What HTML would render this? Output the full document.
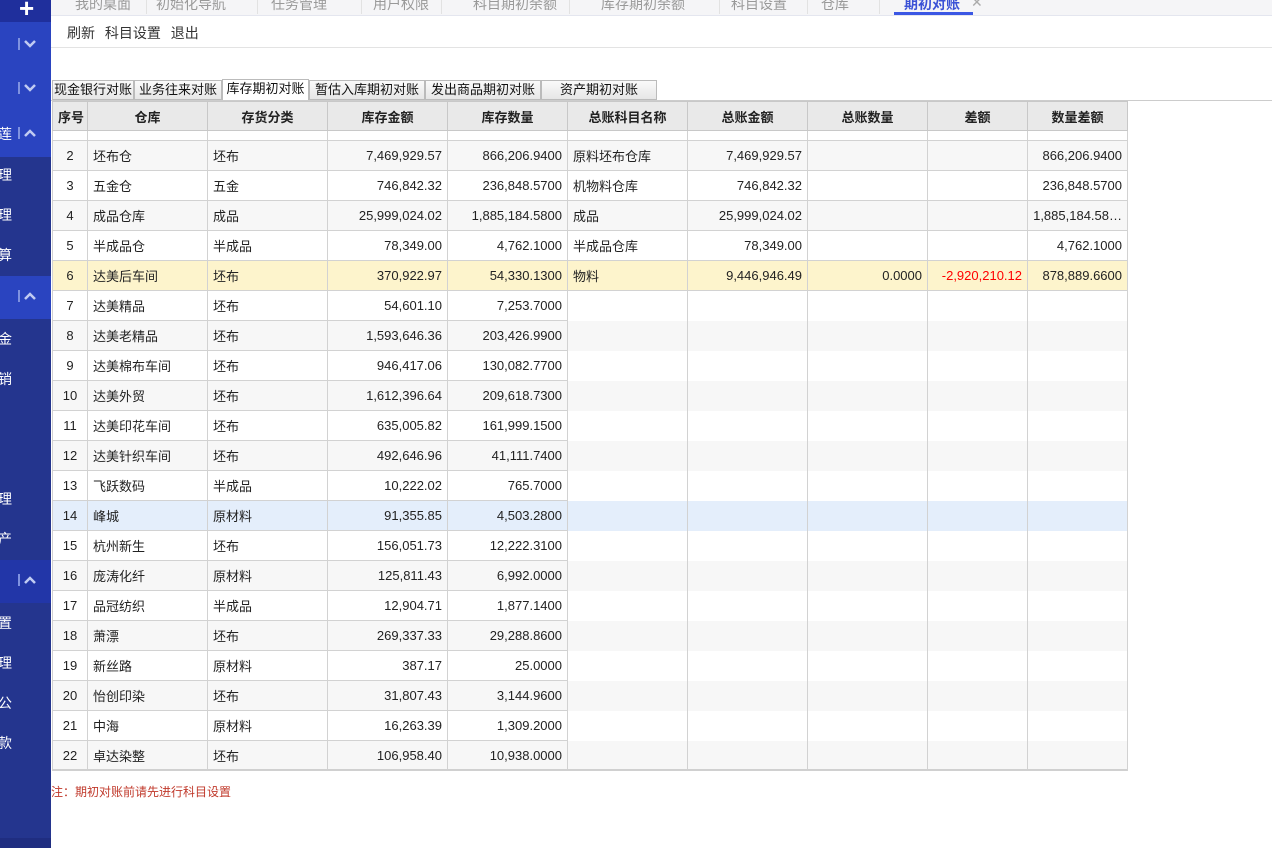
<!DOCTYPE html>
<html><head><meta charset="utf-8"><style>
*{margin:0;padding:0;box-sizing:border-box}
body{width:1272px;height:848px;overflow:hidden;background:#fff;font-family:"Liberation Sans","Noto Sans CJK SC",sans-serif;font-size:13px;color:#222;position:relative}
.sb{position:absolute;left:0;top:0;width:51px;height:848px;background:#24358e}
.bd{position:absolute;left:0;width:51px}
.lt{background:#2a44c0}
.sbt{position:absolute;color:#fff;font-size:14px;left:0}
.chev{position:absolute;left:18px;width:2px;height:12px;background:#7f92e0}
.cg{position:absolute;left:24px}
.tabs{position:absolute;left:51px;top:0;width:1221px;height:16px;background:#f5f5f7;border-bottom:1px solid #e4e6ef}
.tabs span{position:absolute;top:-6px;color:#999;font-size:14px}
.tabs i{position:absolute;top:0;width:1px;height:14px;background:#e2e2e2}
.tb{position:absolute;left:67px;top:23px;font-size:14px;color:#333;word-spacing:6px}
.hl{position:absolute;left:51px;top:47px;width:1221px;height:1px;background:#e3e3e3}
.st{position:absolute;top:80px;height:20px;border:1px solid #bbb;background:linear-gradient(#fafafa,#e6e6e6);font-size:13px;text-align:center;line-height:17px;color:#111}
.st.a{background:#fff;border-bottom-color:#fff;top:79px;height:22px}
.sl{position:absolute;left:51px;top:100px;width:1221px;height:1px;background:#ccc}
table{position:absolute;left:52px;top:101px;width:1075px;border-collapse:collapse;table-layout:fixed}
td,th{border:1px solid #d2d2d2;height:30px;padding:0 5px;white-space:nowrap;overflow:hidden;font-weight:normal}
th{background:#e9e9e9;height:29px;font-weight:bold;text-align:center;border-color:#c8c8c8}
td.n{text-align:right}
td.c{text-align:center}
tr.p td{height:10px}
tr.g td{background:#f7f7f7}
tr.y td{background:#fdf4cc}
tr.b td{background:#e4eefb}
td.e{border-top:none;border-bottom:none}
.bl{position:absolute;left:52px;top:769px;width:1075px;height:2px;background:#d0d0d0}
.note{position:absolute;left:51px;top:783px;color:#c0392b;font-size:12px}
</style></head><body>
<div class="sb">
<div class="bd" style="top:0;height:22px;background:#1f2f9c"></div>
<div class="bd lt" style="top:22px;height:135px"></div>
<div class="bd lt" style="top:276px;height:43px"></div>
<div class="bd" style="top:560px;height:43px;background:#2236a8"></div>
<div class="bd" style="top:838px;height:10px;background:#1f2d80"></div>
<div style="position:absolute;top:-7px;left:19px;color:#fff;font-size:26px;font-weight:bold">+</div>
<span class="chev" style="top:38px"></span><svg class="cg" style="top:39px" width="12" height="10"><polyline points="1,2 6,7 11,2" fill="none" stroke="#c0cbf2" stroke-width="2.5"/></svg>
<span class="chev" style="top:82px"></span><svg class="cg" style="top:83px" width="12" height="10"><polyline points="1,2 6,7 11,2" fill="none" stroke="#c0cbf2" stroke-width="2.5"/></svg>
<span class="chev" style="top:127px"></span><svg class="cg" style="top:128px" width="12" height="10"><polyline points="1,8 6,3 11,8" fill="none" stroke="#c0cbf2" stroke-width="2.5"/></svg>
<span class="chev" style="top:290px"></span><svg class="cg" style="top:291px" width="12" height="10"><polyline points="1,8 6,3 11,8" fill="none" stroke="#c0cbf2" stroke-width="2.5"/></svg>
<span class="chev" style="top:574px"></span><svg class="cg" style="top:575px" width="12" height="10"><polyline points="1,8 6,3 11,8" fill="none" stroke="#c0cbf2" stroke-width="2.5"/></svg>
<span class="sbt" style="top:124px;left:-2px">莲</span>
<span class="sbt" style="top:165px;left:-2px">理</span>
<span class="sbt" style="top:205px;left:-2px">理</span>
<span class="sbt" style="top:245px;left:-2px">算</span>
<span class="sbt" style="top:329px;left:-2px">金</span>
<span class="sbt" style="top:369px;left:-2px">销</span>
<span class="sbt" style="top:489px;left:-2px">理</span>
<span class="sbt" style="top:529px;left:-2px">产</span>
<span class="sbt" style="top:613px;left:-2px">置</span>
<span class="sbt" style="top:653px;left:-2px">理</span>
<span class="sbt" style="top:693px;left:-2px">公</span>
<span class="sbt" style="top:733px;left:-2px">款</span>
</div>
<div class="tabs">
<span style="left:24px">我的桌面</span><i style="left:95px"></i>
<span style="left:105px">初始化导航</span><i style="left:206px"></i>
<span style="left:220px">任务管理</span><i style="left:310px"></i>
<span style="left:322px">用户权限</span><i style="left:390px"></i>
<span style="left:422px">科目期初余额</span><i style="left:518px"></i>
<span style="left:550px">库存期初余额</span><i style="left:668px"></i>
<span style="left:680px">科目设置</span><i style="left:756px"></i>
<span style="left:770px">仓库</span><i style="left:828px"></i>
<span style="left:853px;color:#3b52d6;font-weight:bold">期初对账</span><span style="left:920px;color:#aaa">✕</span>
<div style="position:absolute;left:843px;top:12px;width:79px;height:3px;background:#3b57e4"></div>
</div>
<div class="tb">刷新 科目设置 退出</div>
<div class="hl"></div>
<div class="st" style="left:52px;width:82px">现金银行对账</div>
<div class="st" style="left:134px;width:88px">业务往来对账</div>
<div class="st a" style="left:222px;width:87px">库存期初对账</div>
<div class="st" style="left:309px;width:116px">暂估入库期初对账</div>
<div class="st" style="left:425px;width:116px">发出商品期初对账</div>
<div class="st" style="left:541px;width:116px">资产期初对账</div>
<div class="sl"></div>
<table>
<colgroup><col style="width:35px"><col style="width:120px"><col style="width:120px"><col style="width:120px"><col style="width:120px"><col style="width:120px"><col style="width:120px"><col style="width:120px"><col style="width:100px"><col style="width:100px"></colgroup>
<tr><th>序号</th><th>仓库</th><th>存货分类</th><th>库存金额</th><th>库存数量</th><th>总账科目名称</th><th>总账金额</th><th>总账数量</th><th>差额</th><th>数量差额</th></tr>
<tr class="p"><td></td><td></td><td></td><td></td><td></td><td></td><td></td><td></td><td></td><td></td></tr>
<tr class="g"><td class="c">2</td><td>坯布仓</td><td>坯布</td><td class="n">7,469,929.57</td><td class="n">866,206.9400</td><td>原料坯布仓库</td><td class="n">7,469,929.57</td><td></td><td></td><td class="n">866,206.9400</td></tr>
<tr><td class="c">3</td><td>五金仓</td><td>五金</td><td class="n">746,842.32</td><td class="n">236,848.5700</td><td>机物料仓库</td><td class="n">746,842.32</td><td></td><td></td><td class="n">236,848.5700</td></tr>
<tr class="g"><td class="c">4</td><td>成品仓库</td><td>成品</td><td class="n">25,999,024.02</td><td class="n">1,885,184.5800</td><td>成品</td><td class="n">25,999,024.02</td><td></td><td></td><td class="n">1,885,184.58…</td></tr>
<tr><td class="c">5</td><td>半成品仓</td><td>半成品</td><td class="n">78,349.00</td><td class="n">4,762.1000</td><td>半成品仓库</td><td class="n">78,349.00</td><td></td><td></td><td class="n">4,762.1000</td></tr>
<tr class="y"><td class="c">6</td><td>达美后车间</td><td>坯布</td><td class="n">370,922.97</td><td class="n">54,330.1300</td><td>物料</td><td class="n">9,446,946.49</td><td class="n">0.0000</td><td class="n" style="color:#f00">-2,920,210.12</td><td class="n">878,889.6600</td></tr>
<tr><td class="c">7</td><td>达美精品</td><td>坯布</td><td class="n">54,601.10</td><td class="n">7,253.7000</td><td class="e"></td><td class="e"></td><td class="e"></td><td class="e"></td><td class="e"></td></tr>
<tr class="g"><td class="c">8</td><td>达美老精品</td><td>坯布</td><td class="n">1,593,646.36</td><td class="n">203,426.9900</td><td class="e"></td><td class="e"></td><td class="e"></td><td class="e"></td><td class="e"></td></tr>
<tr><td class="c">9</td><td>达美棉布车间</td><td>坯布</td><td class="n">946,417.06</td><td class="n">130,082.7700</td><td class="e"></td><td class="e"></td><td class="e"></td><td class="e"></td><td class="e"></td></tr>
<tr class="g"><td class="c">10</td><td>达美外贸</td><td>坯布</td><td class="n">1,612,396.64</td><td class="n">209,618.7300</td><td class="e"></td><td class="e"></td><td class="e"></td><td class="e"></td><td class="e"></td></tr>
<tr><td class="c">11</td><td>达美印花车间</td><td>坯布</td><td class="n">635,005.82</td><td class="n">161,999.1500</td><td class="e"></td><td class="e"></td><td class="e"></td><td class="e"></td><td class="e"></td></tr>
<tr class="g"><td class="c">12</td><td>达美针织车间</td><td>坯布</td><td class="n">492,646.96</td><td class="n">41,111.7400</td><td class="e"></td><td class="e"></td><td class="e"></td><td class="e"></td><td class="e"></td></tr>
<tr><td class="c">13</td><td>飞跃数码</td><td>半成品</td><td class="n">10,222.02</td><td class="n">765.7000</td><td class="e"></td><td class="e"></td><td class="e"></td><td class="e"></td><td class="e"></td></tr>
<tr class="b"><td class="c">14</td><td>峰城</td><td>原材料</td><td class="n">91,355.85</td><td class="n">4,503.2800</td><td class="e"></td><td class="e"></td><td class="e"></td><td class="e"></td><td class="e"></td></tr>
<tr><td class="c">15</td><td>杭州新生</td><td>坯布</td><td class="n">156,051.73</td><td class="n">12,222.3100</td><td class="e"></td><td class="e"></td><td class="e"></td><td class="e"></td><td class="e"></td></tr>
<tr class="g"><td class="c">16</td><td>庞涛化纤</td><td>原材料</td><td class="n">125,811.43</td><td class="n">6,992.0000</td><td class="e"></td><td class="e"></td><td class="e"></td><td class="e"></td><td class="e"></td></tr>
<tr><td class="c">17</td><td>品冠纺织</td><td>半成品</td><td class="n">12,904.71</td><td class="n">1,877.1400</td><td class="e"></td><td class="e"></td><td class="e"></td><td class="e"></td><td class="e"></td></tr>
<tr class="g"><td class="c">18</td><td>萧漂</td><td>坯布</td><td class="n">269,337.33</td><td class="n">29,288.8600</td><td class="e"></td><td class="e"></td><td class="e"></td><td class="e"></td><td class="e"></td></tr>
<tr><td class="c">19</td><td>新丝路</td><td>原材料</td><td class="n">387.17</td><td class="n">25.0000</td><td class="e"></td><td class="e"></td><td class="e"></td><td class="e"></td><td class="e"></td></tr>
<tr class="g"><td class="c">20</td><td>怡创印染</td><td>坯布</td><td class="n">31,807.43</td><td class="n">3,144.9600</td><td class="e"></td><td class="e"></td><td class="e"></td><td class="e"></td><td class="e"></td></tr>
<tr><td class="c">21</td><td>中海</td><td>原材料</td><td class="n">16,263.39</td><td class="n">1,309.2000</td><td class="e"></td><td class="e"></td><td class="e"></td><td class="e"></td><td class="e"></td></tr>
<tr class="g"><td class="c">22</td><td>卓达染整</td><td>坯布</td><td class="n">106,958.40</td><td class="n">10,938.0000</td><td class="e"></td><td class="e"></td><td class="e"></td><td class="e"></td><td class="e"></td></tr>
</table>
<div class="bl"></div>
<div class="note">注：期初对账前请先进行科目设置</div>
</body></html>
